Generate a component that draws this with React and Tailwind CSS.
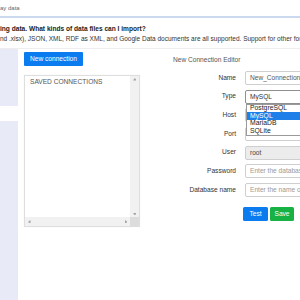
import React from "react";

function Tri({ dir, className }) {
  const pts = {
    up: "0,4 3,0 6,4",
    down: "0,0 6,0 3,4",
    left: "4,0 4,6 0,3",
    right: "0,0 0,6 4,3",
  }[dir];
  const w = dir === "up" || dir === "down" ? 6 : 4;
  const h = dir === "up" || dir === "down" ? 4 : 6;
  return (
    <svg width={w / 1.6} height={h / 1.6} viewBox={`0 0 ${w} ${h}`} className={className}>
      <polygon points={pts} fill="#a3a3a3" />
    </svg>
  );
}

const Label = ({ children }) => (
  <div className="w-[96px] text-right text-[6.6px] leading-none text-[#333]">{children}</div>
);

export default function App() {
  return (
    <div
      className="w-[300px] h-[300px] overflow-hidden bg-white flex flex-col"
      style={{ fontFamily: '"Liberation Sans", Arial, sans-serif' }}
    >
      {/* top strip */}
      <div className="h-[18px] shrink-0 border-b-2 border-[#cbd9ee] flex items-center">
        <span className="text-[6px] text-[#666] leading-none">ay data</span>
      </div>

      {/* description */}
      <div className="h-[31px] shrink-0 border-b border-[#eeeeee] flex flex-col justify-center gap-[3px] whitespace-nowrap">
        <div className="text-[6.6px] font-bold text-[#222] leading-none mt-[2px]">
          ing data. What kinds of data files can I import?
        </div>
        <div className="text-[6.5px] text-[#333] leading-none">
          nd .xlsx), JSON, XML, RDF as XML, and Google Data documents are all supported. Support for other formats
        </div>
      </div>

      {/* main */}
      <div className="flex flex-1 min-h-0">
        {/* sidebar */}
        <div className="w-[18px] shrink-0 flex flex-col">
          <div className="h-[57px] bg-[#e8eaf7]" />
          <div className="h-[15px] bg-white" />
          <div className="flex-1 bg-[#e8eaf7]" />
        </div>

        {/* left column */}
        <div className="w-[122px] shrink-0 pl-[6px] pt-[3px] flex flex-col">
          <button className="w-[59px] h-[14px] bg-[#0b7cef] text-white text-[6.6px] leading-none rounded-[1px] flex items-center justify-center">
            New connection
          </button>
          <div className="mt-[9px] w-[116px] h-[152px] border border-[#dedede] shadow-[0_0_1px_rgba(0,0,0,0.08)] flex flex-col bg-white">
            <div className="flex flex-1 min-h-0">
              <div className="flex-1 pl-[5px] pt-[3px] text-[6.6px] text-[#555] leading-none">
                SAVED CONNECTIONS
              </div>
              <div className="w-[9px] bg-[#f1f1f1] flex flex-col items-center justify-between py-[2px]">
                <Tri dir="up" />
                <Tri dir="down" />
              </div>
            </div>
            <div className="h-[9px] flex">
              <div className="flex-1 bg-[#f1f1f1] flex items-center justify-between px-[3px]">
                <Tri dir="left" />
                <Tri dir="right" />
              </div>
              <div className="w-[9px] bg-[#dcdcdc]" />
            </div>
          </div>
        </div>

        {/* right panel */}
        <div className="flex-1 flex flex-col pt-[8px]">
          <div className="pl-[33px] text-[6.6px] text-[#555] leading-none h-[8px]">New Connection Editor</div>
          <div className="mt-[6px] flex flex-col gap-[4.67px]">
            <div className="flex items-center h-[14px]">
              <Label>Name</Label>
              <div className="ml-[9px] w-[80px] h-[14px] shrink-0 border border-[#cfcfcf] rounded-[2px] flex items-center pl-[4px] text-[6.6px] text-[#555] whitespace-nowrap overflow-hidden">
                New_Connection_1
              </div>
            </div>
            <div className="flex items-center h-[14px] relative">
              <Label>Type</Label>
              <div className="ml-[9px] w-[80px] h-[14px] shrink-0 border border-[#8f8f8f] rounded-[2px] flex items-center pl-[4px] text-[6.6px] text-[#333]">
                MySQL
              </div>
              <div className="absolute left-[106px] top-[14px] w-[70px] bg-white border border-[#9a9a9a] z-10 flex flex-col text-[6.8px] leading-none text-[#222]">
                <div className="h-[7.5px] flex items-center pl-[3px]">PostgreSQL</div>
                <div className="h-[7.5px] flex items-center pl-[3px] bg-[#1e7fe8] text-white">MySQL</div>
                <div className="h-[7.5px] flex items-center pl-[3px]">MariaDB</div>
                <div className="h-[8px] flex items-center pl-[3px]">SQLite</div>
              </div>
            </div>
            <div className="flex items-center h-[14px]">
              <Label>Host</Label>
              <div className="ml-[9px] w-[80px] h-[14px] shrink-0 border border-[#cfcfcf] rounded-[2px]" />
            </div>
            <div className="flex items-center h-[14px]">
              <Label>Port</Label>
              <div className="ml-[9px] w-[80px] h-[14px] shrink-0 border border-[#cfcfcf] rounded-[2px]" />
            </div>
            <div className="flex items-center h-[14px]">
              <Label>User</Label>
              <div className="ml-[9px] w-[80px] h-[14px] shrink-0 border border-[#cfcfcf] rounded-[2px] bg-[#ececec] flex items-center pl-[4px] text-[6.6px] text-[#444]">
                root
              </div>
            </div>
            <div className="flex items-center h-[14px]">
              <Label>Password</Label>
              <div className="ml-[9px] w-[80px] h-[14px] shrink-0 border border-[#cfcfcf] rounded-[2px] flex items-center pl-[4px] text-[6.6px] text-[#999] whitespace-nowrap overflow-hidden">
                Enter the database password
              </div>
            </div>
            <div className="flex items-center h-[14px]">
              <Label>Database name</Label>
              <div className="ml-[9px] w-[80px] h-[14px] shrink-0 border border-[#cfcfcf] rounded-[2px] flex items-center pl-[4px] text-[6.6px] text-[#999] whitespace-nowrap overflow-hidden">
                Enter the name of the database
              </div>
            </div>
          </div>
          <div className="mt-[10px] pl-[103px] flex gap-[2px]">
            <button className="w-[25px] h-[14px] bg-[#0b7cef] text-white text-[6.6px] leading-none rounded-[1.5px] flex items-center justify-center">
              Test
            </button>
            <button className="w-[24px] h-[14px] bg-[#17b144] text-white text-[6.6px] leading-none rounded-[1.5px] flex items-center justify-center">
              Save
            </button>
          </div>
        </div>
      </div>
    </div>
  );
}
